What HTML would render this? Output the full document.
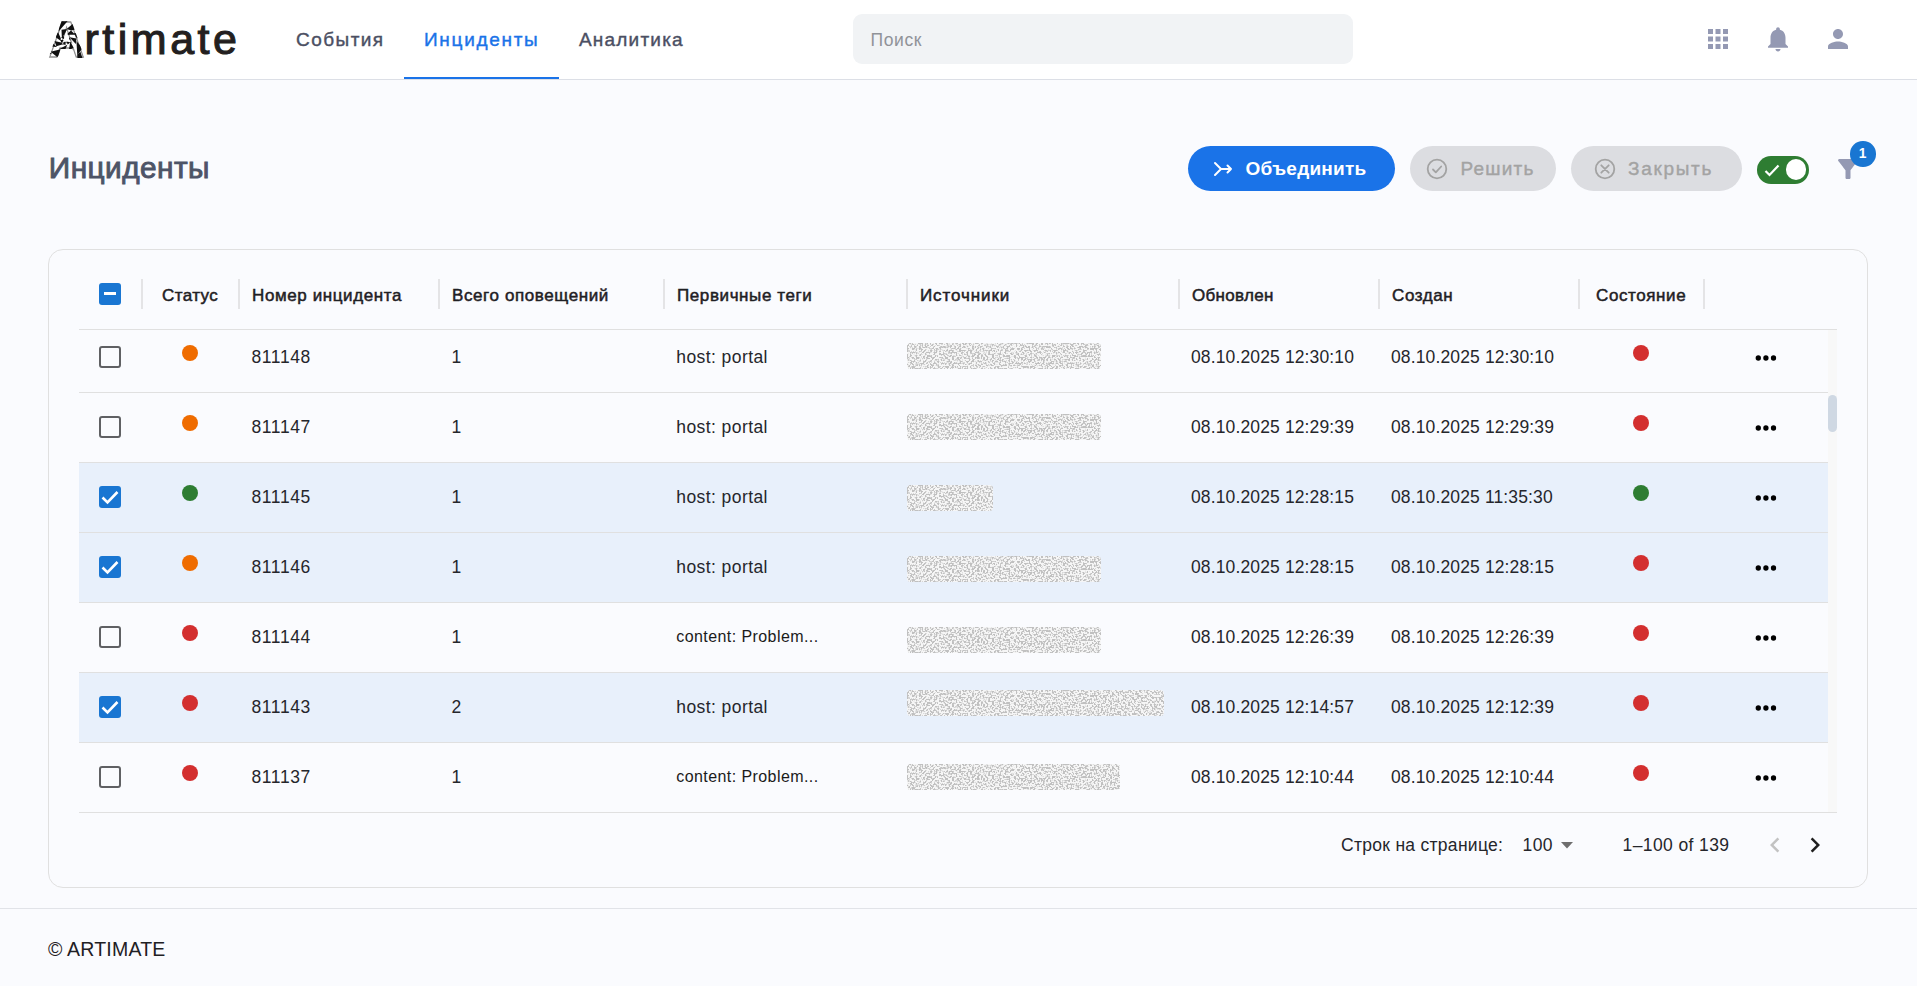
<!DOCTYPE html>
<html lang="ru">
<head>
<meta charset="utf-8">
<title>Artimate — Инциденты</title>
<style>
*{box-sizing:border-box;margin:0;padding:0}
html,body{width:1917px;height:986px;overflow:hidden}
body{background:#fafbfe;font-family:"Liberation Sans",sans-serif;color:#1f2024;position:relative}
.abs{position:absolute}
.t{position:absolute;white-space:nowrap;line-height:1;transform:translateY(-50%)}
.md{-webkit-text-stroke:0.4px currentColor}
/* header */
#hdr{position:absolute;left:0;top:0;width:1917px;height:80px;background:#fff;border-bottom:1px solid #dcdfe6}
.nav{font-size:19px;color:#4b4f63;top:38.8px;letter-spacing:.2px}
.nav.act{color:#1a73e8}
#search{position:absolute;left:853px;top:14px;width:500px;height:50px;border-radius:9px;background:#f1f3f5}
#search span{left:17.5px;top:27px;font-size:17.5px;color:#909298;letter-spacing:.6px}
/* toolbar */
.btn{position:absolute;top:146px;height:45px;border-radius:23px}
.btn .t{top:21.6px;font-size:19px;font-weight:700}
/* card */
#card{position:absolute;left:48px;top:249px;width:1820px;height:639px;border:1px solid #e0e0e0;border-radius:15px}
.hsep{position:absolute;top:279px;width:2px;height:30px;background:#e4e4e6}
.hl{font-size:17px;font-weight:400;-webkit-text-stroke:.5px #1f2024;color:#1f2024;top:295.4px}
.row{position:absolute;left:79px;width:1749px;height:70px;border-bottom:1px solid #e0e0e0}
.row.sel{background:#e8f0fb}
.row .t{top:34.5px;font-size:17.5px;color:#25262b}
.cb{position:absolute;left:20px;top:23px;width:22px;height:22px;border:2.5px solid #5f6063;border-radius:3px}
.cb.on{background:#1976d2;border:0}
.dot{position:absolute;width:16.4px;height:16.4px;border-radius:50%;top:21.8px}
.o{background:#ef6c00}.g{background:#2e7d32}.r{background:#d32f2f}
.s1{left:102.8px}.s2{left:1553.8px}
.c1{left:172.5px;letter-spacing:.6px}.c2{left:372.5px}.c3{left:597.3px;letter-spacing:.42px}.c3.ct{font-size:16px;letter-spacing:.42px;color:#1a1a1a;top:33.5px}.c5{left:1112px;letter-spacing:.13px}.c6{left:1312px;letter-spacing:.13px}
.src{position:absolute;left:828px;top:20px;height:26px;border-radius:3px}
.more{position:absolute;left:1675px;top:30.9px;width:24px;height:8px}
.pg{font-size:17.5px;color:#25262b;top:846px}
</style>
</head>
<body>
<svg width="0" height="0" style="position:absolute">
<defs>
<filter id="nz" x="0" y="0" width="100%" height="100%" color-interpolation-filters="sRGB">
<feTurbulence type="fractalNoise" baseFrequency="0.55" numOctaves="1" seed="7" result="n"/>
<feColorMatrix in="n" type="matrix" values="0 0 0 0 0  0 0 0 0 0  0 0 0 0 0  9 0 0 0 -4.22"/>
<feComposite in="SourceGraphic" operator="in"/>
</filter>
<pattern id="tri" width="9" height="9" patternUnits="userSpaceOnUse" patternTransform="rotate(24)">
<rect width="9" height="9" fill="#fff"/>
<path d="M0 0L9 0L0 9ZM4.5 4.5L9 9L9 2Z M2 9 L5 6 L6 9Z" fill="#111"/>
</pattern>
</defs>
</svg>

<div id="hdr">
  <svg class="abs" style="left:45.5px;top:14.7px" width="40" height="50" viewBox="0 0 40 50"><defs><mask id="ma"><text x="2.5" y="42" font-family="Liberation Sans, sans-serif" font-weight="700" font-size="50" fill="#fff" stroke="#fff" stroke-width="1.8">A</text></mask></defs><text x="2.5" y="42" font-family="Liberation Sans, sans-serif" font-weight="700" font-size="50" fill="none" stroke="#222" stroke-width="1.3" stroke-opacity=".5" mask="url(#ma)">A</text><path mask="url(#ma)" fill="#111" d="M19.5 25.0L23.9 27.4L21.8 29.5ZM19.5 25.0L19.6 30.0L16.8 29.2ZM19.5 25.0L15.2 27.6L14.5 24.7ZM19.5 25.0L15.1 22.6L17.2 20.5ZM19.5 25.0L19.4 20.0L22.2 20.8ZM19.5 25.0L23.8 22.4L24.5 25.3ZM24.3 26.5L27.5 32.5L22.8 35.5ZM21.3 29.7L18.7 36.0L13.4 34.1ZM17.0 29.3L10.4 31.2L8.5 25.9L15.2 27.5ZM14.6 25.7L9.0 21.7L12.0 17.0L14.8 23.2ZM15.8 21.6L15.5 14.8L21.1 14.1L18.0 20.2ZM19.9 20.0L25.0 15.5L29.0 19.4ZM23.6 22.2L30.4 23.4L29.8 29.0ZM30.4 26.1L36.6 33.3L31.3 39.9ZM26.5 33.5L25.8 42.9L17.3 43.9L22.0 35.7ZM18.4 35.9L11.2 42.1L4.6 36.8L13.7 34.4ZM11.0 32.0L1.6 31.3L0.6 22.8ZM8.6 23.9L2.4 16.7L7.7 10.1ZM12.5 16.5L13.2 7.1L21.7 6.1ZM20.6 14.1L27.8 7.9L34.4 13.2L25.3 15.6ZM28.0 18.0L37.4 18.7L38.4 27.2L30.2 22.5ZM37.9 29.7L47.6 40.3L43.1 46.6ZM34.4 36.8L38.9 50.4L32.3 54.3L31.2 40.0ZM28.3 41.8L26.9 56.1L19.2 57.0ZM20.7 44.0L13.6 56.4L6.3 54.1L16.2 43.7ZM12.9 42.8L1.3 51.3L-4.4 46.2ZM6.2 38.6L-7.8 41.6L-11.0 34.7ZM1.8 32.0L-12.2 29.1L-12.3 21.4L0.7 27.6ZM0.5 24.2L-11.2 15.8L-8.1 8.8ZM2.5 16.6L-4.8 4.2L0.9 -1.0ZM7.4 10.4L5.8 -3.9L13.1 -6.4L11.2 7.9ZM14.4 6.7L18.7 -7.0L26.4 -6.2L18.9 6.0ZM22.3 6.2L31.8 -4.5L38.5 -0.7ZM29.7 8.9L42.8 3.0L47.3 9.2L33.2 11.8ZM35.3 14.5L49.7 14.4L51.3 21.9L37.4 18.5ZM38.2 21.8L51.4 27.6L49.9 35.1L38.5 26.4Z"/></svg>
  <span class="t" id="logo" style="left:84.5px;top:38.6px;font-size:43px;color:#231f20;letter-spacing:3.5px;-webkit-text-stroke:1.1px #231f20">rtimate</span>
  <span class="t nav md" id="n1" style="left:296px;letter-spacing:1.45px">События</span>
  <span class="t nav md act" id="n2" style="left:424px;letter-spacing:1.7px">Инциденты</span>
  <span class="t nav md" id="n3" style="left:579px;letter-spacing:1.2px">Аналитика</span>
  <div class="abs" style="left:404px;top:76.5px;width:155px;height:2.5px;background:#1a73e8"></div>
  <div id="search"><span class="t">Поиск</span></div>
  <svg class="abs" style="left:1703px;top:24px" width="30" height="30" viewBox="0 0 24 24" fill="#9499b3"><path d="M4 8h4V4H4v4zm6 12h4v-4h-4v4zm-6 0h4v-4H4v4zm0-6h4v-4H4v4zm6 0h4v-4h-4v4zm6-10v4h4V4h-4zm-6 4h4V4h-4v4zm6 6h4v-4h-4v4zm0 6h4v-4h-4v4z"/></svg>
  <svg class="abs" style="left:1763px;top:24px" width="30" height="30" viewBox="0 0 24 24" fill="#9499b3"><path d="M12 22c1.1 0 2-.9 2-2h-4c0 1.100.89 2 2 2zm6-6v-5c0-3.070-1.640-5.640-4.500-6.320V4c0-.83-.67-1.500-1.500-1.500s-1.500.67-1.500 1.500v.68C7.630 5.360 6 7.920 6 11v5l-2 2v1h16v-1l-2-2z"/></svg>
  <svg class="abs" style="left:1823px;top:24px" width="30" height="30" viewBox="0 0 24 24" fill="#9499b3"><path d="M12 12c2.210 0 4-1.790 4-4s-1.790-4-4-4-4 1.790-4 4 1.790 4 4 4zm0 2c-2.670 0-8 1.340-8 4v2h16v-2c0-2.660-5.330-4-8-4z"/></svg>
</div>

<span class="t" id="title" style="left:48.8px;top:167.7px;font-size:29.8px;color:#4d5467;letter-spacing:.45px;-webkit-text-stroke:.9px #4d5467">Инциденты</span>

<div class="btn" style="left:1188px;width:207px;background:#1a73e8">
  <svg class="abs" style="left:25px;top:13px" width="20" height="20" viewBox="0 0 20 20" fill="none" stroke="#fff" stroke-width="2" stroke-linecap="round" stroke-linejoin="round"><path d="M2 4l6 6-6 6M8 10h10M14.500 6.500L18 10l-3.500 3.500"/></svg>
  <span class="t" id="b1" style="left:57.5px;color:#fff;letter-spacing:.24px">Объединить</span>
</div>
<div class="btn" style="left:1410px;width:146px;background:#dcdde1">
  <svg class="abs" style="left:15px;top:10.500px" width="24" height="24" viewBox="0 0 24 24" fill="none" stroke="#a3a3a3" stroke-width="1.800" stroke-linecap="round" stroke-linejoin="round"><circle cx="12" cy="12" r="9.300"/><path d="M8 12.500l2.800 2.800 5.400-5.800"/></svg>
  <span class="t md" id="b2" style="left:50.5px;color:#a3a3a3;font-weight:400;letter-spacing:1.2px">Решить</span>
</div>
<div class="btn" style="left:1571px;width:171px;background:#dcdde1">
  <svg class="abs" style="left:22px;top:10.500px" width="24" height="24" viewBox="0 0 24 24" fill="none" stroke="#a3a3a3" stroke-width="1.800" stroke-linecap="round"><circle cx="12" cy="12" r="9.300"/><path d="M8.300 8.300l7.400 7.400M15.700 8.300l-7.400 7.400"/></svg>
  <span class="t md" id="b3" style="left:57px;color:#a3a3a3;font-weight:400;letter-spacing:1.7px">Закрыть</span>
</div>
<div class="abs" style="left:1757px;top:155.7px;width:52.2px;height:28.2px;border-radius:15px;background:#2e7d32">
  <svg class="abs" style="left:7px;top:7.6px" width="16" height="14" viewBox="0 0 16 14" fill="none" stroke="#fff" stroke-width="2.200"><path d="M1.500 8l4 4L14.500 2.500"/></svg>
  <div class="abs" style="left:28.600px;top:3.700px;width:20.800px;height:20.800px;border-radius:50%;background:#fff"></div>
</div>
<svg class="abs" style="left:1833px;top:154px" width="30" height="30" viewBox="0 0 24 24" fill="#9499b3"><path d="M4.250 5.610C6.270 8.200 10 13 10 13v6c0 .55.450 1 1 1h2c.55 0 1-.45 1-1v-6s3.720-4.800 5.740-7.390A.998.998 0 0 0 18.950 4H5.040a1 1 0 0 0-.79 1.610z"/></svg>
<div class="abs" style="left:1850.3px;top:141.2px;width:25.4px;height:25.4px;border-radius:50%;background:#1976d2"></div>
<span class="t" style="left:1858.7px;top:154.2px;font-size:13.75px;font-weight:700;color:#fff">1</span>

<div id="card"></div>
<!--TBL-->
<div class="abs" style="left:79px;top:329px;width:1758px;height:1px;background:#e0e0e0"></div>
<div class="abs" style="left:99px;top:283px;width:22px;height:22px;border-radius:3px;background:#1976d2"><div class="abs" style="left:4.6px;top:9.4px;width:12.7px;height:3px;background:#fff"></div></div>
<div class="hsep" style="left:141px"></div>
<div class="hsep" style="left:238px"></div>
<div class="hsep" style="left:438px"></div>
<div class="hsep" style="left:663px"></div>
<div class="hsep" style="left:906px"></div>
<div class="hsep" style="left:1178px"></div>
<div class="hsep" style="left:1378px"></div>
<div class="hsep" style="left:1578px"></div>
<div class="hsep" style="left:1703px"></div>
<span class="t hl" id="h0" style="left:162px;letter-spacing:0.4px">Статус</span>
<span class="t hl" id="h1" style="left:252px;letter-spacing:0.6px">Номер инцидента</span>
<span class="t hl" id="h2" style="left:452px;letter-spacing:0.6px">Всего оповещений</span>
<span class="t hl" id="h3" style="left:677px;letter-spacing:0.6px">Первичные теги</span>
<span class="t hl" id="h4" style="left:920px;letter-spacing:0.9px">Источники</span>
<span class="t hl" id="h5" style="left:1192px;letter-spacing:0.3px">Обновлен</span>
<span class="t hl" id="h6" style="left:1392px;letter-spacing:0.6px">Создан</span>
<span class="t hl" id="h7" style="left:1596px;letter-spacing:0.6px">Состояние</span>
<div class="abs" style="left:79px;top:330px;width:1758px;height:483px;overflow:hidden">
<div class="abs" style="left:1749px;top:0;width:9px;height:483px;background:#f8f8f8"></div>
<div class="abs" style="left:1749px;top:65px;width:9px;height:37px;border-radius:5px;background:#cfd8e3"></div>
<div class="row" style="left:0;top:-7px"><div class="cb"></div><div class="dot s1 o"></div><span class="t c1" id="r0a">811148</span><span class="t c2">1</span><span class="t c3" id="r0c">host: portal</span><svg class="src" style="top:20px" width="194" height="26"><rect width="194" height="26" rx="3" fill="#f6f6f6"/><rect width="194" height="26" rx="3" fill="#c0c0c0" filter="url(#nz)"/></svg><span class="t c5" id="r0e">08.10.2025 12:30:10</span><span class="t c6" id="r0f">08.10.2025 12:30:10</span><div class="dot s2 r"></div><svg class="more" viewBox="0 0 24 8" fill="#000"><circle cx="4.3" cy="4" r="2.65"/><circle cx="11.9" cy="4" r="2.65"/><circle cx="19.5" cy="4" r="2.65"/></svg></div>
<div class="row" style="left:0;top:63px"><div class="cb"></div><div class="dot s1 o"></div><span class="t c1" id="r1a">811147</span><span class="t c2">1</span><span class="t c3" id="r1c">host: portal</span><svg class="src" style="top:21px" width="194" height="26"><rect width="194" height="26" rx="3" fill="#f6f6f6"/><rect width="194" height="26" rx="3" fill="#c0c0c0" filter="url(#nz)"/></svg><span class="t c5" id="r1e">08.10.2025 12:29:39</span><span class="t c6" id="r1f">08.10.2025 12:29:39</span><div class="dot s2 r"></div><svg class="more" viewBox="0 0 24 8" fill="#000"><circle cx="4.3" cy="4" r="2.65"/><circle cx="11.9" cy="4" r="2.65"/><circle cx="19.5" cy="4" r="2.65"/></svg></div>
<div class="row sel" style="left:0;top:133px"><div class="cb on"><svg width="22" height="22" viewBox="0 0 22 22" fill="none" stroke="#fff" stroke-width="2.6"><path d="M3.5 11.5l5 5L18.5 6"/></svg></div><div class="dot s1 g"></div><span class="t c1" id="r2a">811145</span><span class="t c2">1</span><span class="t c3" id="r2c">host: portal</span><svg class="src" style="top:22px" width="86" height="26"><rect width="86" height="26" rx="3" fill="#f6f6f6"/><rect width="86" height="26" rx="3" fill="#c0c0c0" filter="url(#nz)"/></svg><span class="t c5" id="r2e">08.10.2025 12:28:15</span><span class="t c6" id="r2f">08.10.2025 11:35:30</span><div class="dot s2 g"></div><svg class="more" viewBox="0 0 24 8" fill="#000"><circle cx="4.3" cy="4" r="2.65"/><circle cx="11.9" cy="4" r="2.65"/><circle cx="19.5" cy="4" r="2.65"/></svg></div>
<div class="row sel" style="left:0;top:203px"><div class="cb on"><svg width="22" height="22" viewBox="0 0 22 22" fill="none" stroke="#fff" stroke-width="2.6"><path d="M3.5 11.5l5 5L18.5 6"/></svg></div><div class="dot s1 o"></div><span class="t c1" id="r3a">811146</span><span class="t c2">1</span><span class="t c3" id="r3c">host: portal</span><svg class="src" style="top:23px" width="194" height="26"><rect width="194" height="26" rx="3" fill="#f6f6f6"/><rect width="194" height="26" rx="3" fill="#c0c0c0" filter="url(#nz)"/></svg><span class="t c5" id="r3e">08.10.2025 12:28:15</span><span class="t c6" id="r3f">08.10.2025 12:28:15</span><div class="dot s2 r"></div><svg class="more" viewBox="0 0 24 8" fill="#000"><circle cx="4.3" cy="4" r="2.65"/><circle cx="11.9" cy="4" r="2.65"/><circle cx="19.5" cy="4" r="2.65"/></svg></div>
<div class="row" style="left:0;top:273px"><div class="cb"></div><div class="dot s1 r"></div><span class="t c1" id="r4a">811144</span><span class="t c2">1</span><span class="t c3 ct" id="r4c">content: Problem...</span><svg class="src" style="top:24px" width="194" height="26"><rect width="194" height="26" rx="3" fill="#f6f6f6"/><rect width="194" height="26" rx="3" fill="#c0c0c0" filter="url(#nz)"/></svg><span class="t c5" id="r4e">08.10.2025 12:26:39</span><span class="t c6" id="r4f">08.10.2025 12:26:39</span><div class="dot s2 r"></div><svg class="more" viewBox="0 0 24 8" fill="#000"><circle cx="4.3" cy="4" r="2.65"/><circle cx="11.9" cy="4" r="2.65"/><circle cx="19.5" cy="4" r="2.65"/></svg></div>
<div class="row sel" style="left:0;top:343px"><div class="cb on"><svg width="22" height="22" viewBox="0 0 22 22" fill="none" stroke="#fff" stroke-width="2.6"><path d="M3.5 11.5l5 5L18.5 6"/></svg></div><div class="dot s1 r"></div><span class="t c1" id="r5a">811143</span><span class="t c2">2</span><span class="t c3" id="r5c">host: portal</span><svg class="src" style="top:17px" width="257" height="26"><rect width="257" height="26" rx="3" fill="#f6f6f6"/><rect width="257" height="26" rx="3" fill="#c0c0c0" filter="url(#nz)"/></svg><span class="t c5" id="r5e">08.10.2025 12:14:57</span><span class="t c6" id="r5f">08.10.2025 12:12:39</span><div class="dot s2 r"></div><svg class="more" viewBox="0 0 24 8" fill="#000"><circle cx="4.3" cy="4" r="2.65"/><circle cx="11.9" cy="4" r="2.65"/><circle cx="19.5" cy="4" r="2.65"/></svg></div>
<div class="row" style="left:0;top:413px"><div class="cb"></div><div class="dot s1 r"></div><span class="t c1" id="r6a">811137</span><span class="t c2">1</span><span class="t c3 ct" id="r6c">content: Problem...</span><svg class="src" style="top:21px" width="213" height="26"><rect width="213" height="26" rx="3" fill="#f6f6f6"/><rect width="213" height="26" rx="3" fill="#c0c0c0" filter="url(#nz)"/></svg><span class="t c5" id="r6e">08.10.2025 12:10:44</span><span class="t c6" id="r6f">08.10.2025 12:10:44</span><div class="dot s2 r"></div><svg class="more" viewBox="0 0 24 8" fill="#000"><circle cx="4.3" cy="4" r="2.65"/><circle cx="11.9" cy="4" r="2.65"/><circle cx="19.5" cy="4" r="2.65"/></svg></div>
</div>
<span class="t pg" id="p1" style="left:1341px;letter-spacing:.29px">Строк на странице:</span>
<span class="t pg" id="p2" style="left:1522.5px;letter-spacing:.4px">100</span>
<svg class="abs" style="left:1561.3px;top:842.3px" width="12" height="7" viewBox="0 0 12 7" fill="#6e6e6e"><path d="M0 0h12l-6 6.600z"/></svg>
<span class="t pg" id="p3" style="left:1622.5px;letter-spacing:.4px">1–100 of 139</span>
<svg class="abs" style="left:1760.2px;top:830px" width="30" height="30" viewBox="0 0 24 24" fill="#c2c2c2"><path d="M15.410 7.410L14 6l-6 6 6 6 1.410-1.410L10.830 12z"/></svg>
<svg class="abs" style="left:1800.1px;top:830px" width="30" height="30" viewBox="0 0 24 24" fill="#1f1f1f"><path d="M10 6L8.590 7.410 13.170 12l-4.580 4.590L10 18l6-6z"/></svg>
<!--/TBL-->

<div class="abs" style="left:79px;top:812px;width:1758px;height:1px;background:#e0e0e0"></div>
<div class="abs" style="left:0;top:908px;width:1917px;height:1px;background:#e1e3e8"></div>
<span class="t" id="foot" style="left:48px;top:950px;font-size:19.5px;color:#1f2024;letter-spacing:.2px">© ARTIMATE</span>
</body>
</html>
